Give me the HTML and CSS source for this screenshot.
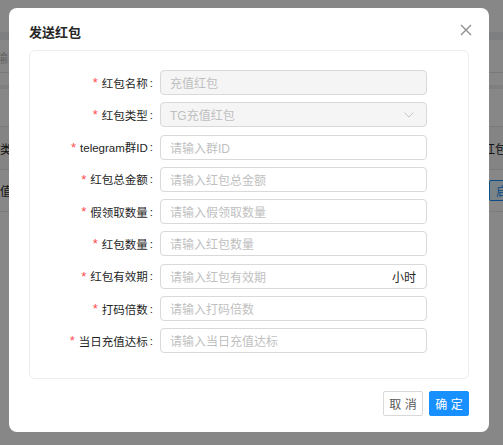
FILE: index.html
```html
<!DOCTYPE html>
<html lang="zh-CN">
<head>
    <meta charset="UTF-8">
    <meta name="viewport" content="width=device-width, initial-scale=1.0">
    <title>发送红包</title>
    <link rel="stylesheet" href="styles.css">
</head>
<body>
    <!-- page behind the dialog -->
    <div class="page">
        <div class="page-top"></div>
        <div class="page-band"></div>
        <div class="search-row">
            <span class="search-text">请输入</span>
        </div>
        <div class="page-gap"></div>
        <div class="page-band thin"></div>
        <div class="toolbar"></div>
        <div class="table-row head">
            <span class="cell-left">红包类型</span>
            <span class="cell-right">红包名称</span>
        </div>
        <div class="table-row">
            <span class="cell-left shift">充值红包</span>
            <span class="cell-right"><span class="tag-btn">启用</span></span>
        </div>
    </div>

    <div class="mask">
        <div class="modal">
            <div class="modal-header">
                <h2 class="modal-title">发送红包</h2>
                <button class="modal-close" aria-label="关闭">
                    <svg width="12" height="12" viewBox="0 0 12 12">
                        <path d="M1 1 L11 11 M11 1 L1 11" stroke="#8c8c8c" stroke-width="1.3" fill="none"/>
                    </svg>
                </button>
            </div>

            <div class="form-card">
                <div class="form-grid">
                    <label class="form-label required">红包名称</label>
                    <div class="form-input disabled"><span class="placeholder">充值红包</span></div>

                    <label class="form-label required">红包类型</label>
                    <div class="form-input disabled">
                        <span class="placeholder">TG充值红包</span>
                        <svg class="select-arrow" width="10" height="6" viewBox="0 0 10 6">
                            <path d="M0.5 0.5 L5 5 L9.5 0.5" stroke="#c4c4c4" stroke-width="1" fill="none"/>
                        </svg>
                    </div>

                    <label class="form-label required">telegram群ID</label>
                    <div class="form-input"><span class="placeholder">请输入群ID</span></div>

                    <label class="form-label required">红包总金额</label>
                    <div class="form-input"><span class="placeholder">请输入红包总金额</span></div>

                    <label class="form-label required">假领取数量</label>
                    <div class="form-input"><span class="placeholder">请输入假领取数量</span></div>

                    <label class="form-label required">红包数量</label>
                    <div class="form-input"><span class="placeholder">请输入红包数量</span></div>

                    <label class="form-label required">红包有效期</label>
                    <div class="form-input">
                        <span class="placeholder">请输入红包有效期</span>
                        <span class="suffix">小时</span>
                    </div>

                    <label class="form-label required">打码倍数</label>
                    <div class="form-input"><span class="placeholder">请输入打码倍数</span></div>

                    <label class="form-label required">当日充值达标</label>
                    <div class="form-input"><span class="placeholder">请输入当日充值达标</span></div>
                </div>
            </div>

            <div class="modal-footer">
                <button class="btn">取 消</button>
                <button class="btn btn-primary">确 定</button>
            </div>
        </div>
    </div>
</body>
</html>
```

FILE: styles.css
```css
body {
    margin: 0;
    padding: 0;
    width: 503px;
    height: 445px;
    overflow: hidden;
    background: #fff;
    font-family: 'Liberation Sans', 'Noto Sans CJK SC', sans-serif;
    font-size: 12px;
    color: #262626;
}

/* background page */
.page {
    width: 503px;
}

.page-top {
    height: 32px;
}

.page-band {
    height: 8px;
    background: #eef0f3;
}

.page-band.thin {
    height: 4px;
}

.search-row {
    height: 33px;
    border-bottom: 1px solid #e4e4e4;
    display: flex;
    align-items: flex-end;
    padding-bottom: 6px;
    box-sizing: border-box;
}

.search-text {
    margin-left: -16px;
    color: #bfbfbf;
}

.page-gap {
    height: 12px;
}

.toolbar {
    height: 37px;
    border-bottom: 1px solid #e8e8e8;
}

.table-row {
    height: 41px;
    display: flex;
    align-items: center;
    border-bottom: 1px solid #e8e8e8;
    white-space: nowrap;
}

.table-row.head {
    height: 42px;
    background: #fafafa;
}

.cell-left {
    margin-left: -24px;
}

.cell-left.shift {
    margin-left: -12px;
}

.cell-right {
    margin-left: auto;
    width: 20px;
}

.tag-btn {
    display: inline-block;
    margin-left: 6px;
    padding: 1px 6px;
    border: 1px solid #1890ff;
    border-radius: 2px;
    background: #e6f7ff;
    color: #1890ff;
}

/* dialog */
.mask {
    position: fixed;
    top: 0;
    left: 0;
    right: 0;
    bottom: 0;
    background: rgba(0, 0, 0, 0.47);
    padding: 8px 0 0 9px;
}

.modal {
    width: 480px;
    height: 424px;
    background: #fff;
    border-radius: 8px;
    padding: 0 20px 16px;
    box-sizing: border-box;
    display: flex;
    flex-direction: column;
}

.modal-header {
    display: flex;
    justify-content: space-between;
    align-items: flex-start;
    padding: 14px 0 6px;
}

.modal-title {
    margin: 0;
    font-size: 13px;
    line-height: 22px;
    font-weight: bold;
    color: #262626;
}

.modal-close {
    border: none;
    background: none;
    padding: 0;
    margin: 2px -3px 0 0;
    width: 12px;
    height: 12px;
    display: flex;
    cursor: pointer;
}

.form-card {
    border: 1px solid #ebedf0;
    border-radius: 6px;
    padding: 19px 40px 25px 0;
}

.form-grid {
    display: grid;
    grid-template-columns: 123px 267px;
    grid-auto-rows: 25px;
    column-gap: 7px;
    row-gap: 7.3px;
}

.form-label {
    display: flex;
    align-items: center;
    justify-content: flex-end;
    color: #1f1f1f;
    font-size: 11.5px;
    white-space: nowrap;
}

.form-label.required::before {
    content: '*';
    color: #ff4d4f;
    margin-right: 4px;
    font-family: 'Liberation Sans', sans-serif;
    font-size: 13px;
}

.form-label::after {
    content: ':';
    margin-left: 2px;
}

.form-input {
    display: flex;
    align-items: center;
    border: 1px solid #d9d9d9;
    border-radius: 4px;
    padding: 0 10px 0 9px;
    background: #fff;
    box-sizing: border-box;
}

.form-input.disabled {
    background: #f5f5f5;
}

.placeholder {
    color: #bfbfbf;
    flex: 1;
}

.select-arrow {
    margin-right: 2px;
}

.suffix {
    color: #262626;
}

.modal-footer {
    display: flex;
    justify-content: flex-end;
    gap: 6px;
    margin-top: auto;
}

.btn {
    width: 40px;
    height: 25px;
    padding: 0;
    border: 1px solid #d9d9d9;
    border-radius: 2px;
    background: #fff;
    color: #595959;
    font-family: 'Liberation Sans', 'Noto Sans CJK SC', sans-serif;
    font-size: 12px;
    cursor: pointer;
}

.btn-primary {
    background: #1890ff;
    border-color: #1890ff;
    color: #fff;
}
```
